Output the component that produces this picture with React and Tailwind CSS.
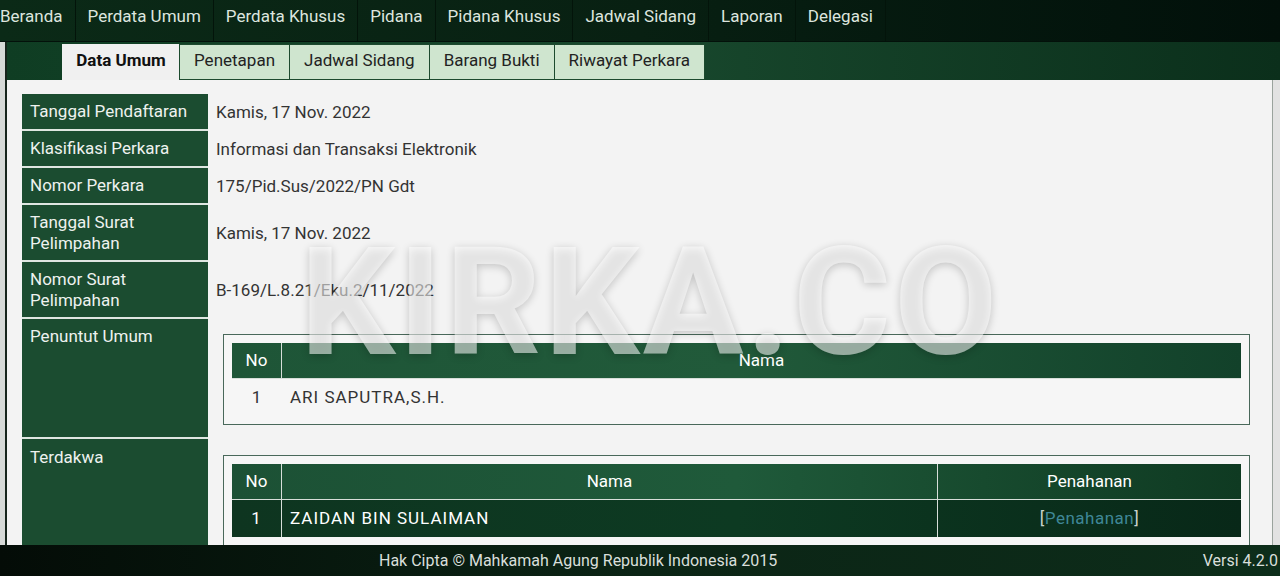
const menu = [
  "Beranda",
  "Perdata Umum",
  "Perdata Khusus",
  "Pidana",
  "Pidana Khusus",
  "Jadwal Sidang",
  "Laporan",
  "Delegasi",
];

const tabs = ["Penetapan", "Jadwal Sidang", "Barang Bukti", "Riwayat Perkara"];

function Label({ children, className = "" }) {
  return (
    <div
      className={`w-[186px] shrink-0 bg-[#1b4c30] text-[#eef2ef] text-[17px] leading-[21px] pl-2 pr-2 border-b-2 border-[#dfe6e1] ${className}`}
    >
      {children}
    </div>
  );
}

function Row({ label, value, tall }) {
  return (
    <div className="flex">
      <Label className={`flex items-center ${tall ? "h-[57px]" : "h-[37px]"}`}>{label}</Label>
      <div className="flex items-center pl-2 text-[17px] text-[#333]">{value}</div>
    </div>
  );
}

function App() {
  return (
    <div className="relative w-[1280px] h-[576px] overflow-hidden bg-[#0b2716] font-['Roboto',sans-serif]">
      <nav className="h-[42px] flex bg-gradient-to-r from-[#0b2a17] via-[#082012] to-[#02100a] border-b border-[#03110a]">
        <ul className="flex -ml-3">
          {menu.map((m) => (
            <li
              key={m}
              className="h-[41px] flex items-center pb-[7px] px-3 text-[17px] text-[#dde5df] border-r border-[#03140a]"
            >
              {m}
            </li>
          ))}
        </ul>
      </nav>

      <div className="flex h-[503px]">
        <div className="w-[5px] bg-[#d6d9d7]" />
        <div className="w-[2px] bg-[#16241b]" />
        <div className="flex-1 flex flex-col">
          <div className="h-[38px] flex pl-[55px] pt-[2px] bg-gradient-to-r from-[#0f3d23] via-[#18482d] to-[#0b2f1b]">
            <div className="w-[118px] h-[36px] pb-[2px] bg-[#f0f0f0] flex items-center justify-center text-[17px] font-bold text-[#111]">
              Data Umum
            </div>
            {tabs.map((t) => (
              <div
                key={t}
                className="h-[36px] pb-[2px] px-[14px] flex items-center bg-[#cfe5cf] border border-[#1c4a2e] text-[17px] text-[#222] -ml-px first:ml-0"
              >
                {t}
              </div>
            ))}
          </div>

          <div className="flex-1 flex overflow-hidden">
            <div className="flex-1 bg-[#f3f3f3] pl-[15px] pt-[14px] pr-[22px]">
              <Row label="Tanggal Pendaftaran" value="Kamis, 17 Nov. 2022" />
              <Row label="Klasifikasi Perkara" value="Informasi dan Transaksi Elektronik" />
              <Row label="Nomor Perkara" value="175/Pid.Sus/2022/PN Gdt" />
              <Row label={<span>Tanggal Surat<br />Pelimpahan</span>} value="Kamis, 17 Nov. 2022" tall />
              <Row label={<span>Nomor Surat<br />Pelimpahan</span>} value="B-169/L.8.21/Eku.2/11/2022" tall />

              <div className="flex">
                <Label className="pt-[7px]">Penuntut Umum</Label>
                <div className="flex-1 pl-[15px] pt-[15px] pb-[14px]">
                  <div className="border border-[#49685a] bg-[#f6f6f6] p-2">
                    <div className="flex h-[36px] bg-gradient-to-r from-[#1e5537] via-[#215a3a] to-[#12412a] text-white text-[17px] border-b border-[#d7ded9]">
                      <div className="w-[50px] flex items-center justify-center border-r border-[#d7ded9]">No</div>
                      <div className="flex-1 flex items-center justify-center">Nama</div>
                    </div>
                    <div className="flex h-[37px] text-[17px] text-[#333] tracking-[1px]">
                      <div className="w-[50px] flex items-center justify-center">1</div>
                      <div className="flex-1 flex items-center pl-2">ARI SAPUTRA,S.H.</div>
                    </div>
                  </div>
                </div>
              </div>

              <div className="flex">
                <Label className="pt-[8px] h-[120px]">Terdakwa</Label>
                <div className="flex-1 pl-[15px] pt-[16px]">
                  <div className="border border-[#49685a] bg-[#f6f6f6] p-2">
                    <div className="flex h-[36px] bg-gradient-to-r from-[#1c5135] via-[#1f5a3a] to-[#0f3a22] text-white text-[17px] border-b border-[#d7ded9]">
                      <div className="w-[50px] flex items-center justify-center border-r border-[#d7ded9]">No</div>
                      <div className="w-[656px] flex items-center justify-center border-r border-[#d7ded9]">Nama</div>
                      <div className="flex-1 flex items-center justify-center">Penahanan</div>
                    </div>
                    <div className="flex h-[37px] bg-gradient-to-r from-[#0e3520] via-[#0d3a22] to-[#082818] text-white text-[17px] tracking-[1px]">
                      <div className="w-[50px] flex items-center justify-center border-r border-[#d7ded9]">1</div>
                      <div className="w-[656px] flex items-center pl-2 border-r border-[#d7ded9]">ZAIDAN BIN SULAIMAN</div>
                      <div className="flex-1 flex items-center justify-center text-[#c9d1cc] tracking-[0.5px]">
                        [<span className="text-[#3f8797]">Penahanan</span>]
                      </div>
                    </div>
                  </div>
                </div>
              </div>
            </div>
            <div className="w-[8px] bg-[#e2e2e2] border-l border-[#9aa39d]" />
          </div>
        </div>
      </div>

      <footer className="h-[31px] flex items-center pl-[379px] pr-[2px] bg-gradient-to-r from-[#040c07] via-[#0b2415] to-[#0d2d1a] text-[16px] text-[#d9dfdb]">
        <span>Hak Cipta © Mahkamah Agung Republik Indonesia 2015</span>
        <span className="ml-auto">Versi 4.2.0</span>
      </footer>

      <div className="absolute left-[300px] top-[228px] text-[150px] leading-none font-bold text-white/55 tracking-[3px] pointer-events-none [text-shadow:0_2px_8px_rgba(0,0,0,0.2)]">
        KIRKA.CO
      </div>
    </div>
  );
}

export default App;
